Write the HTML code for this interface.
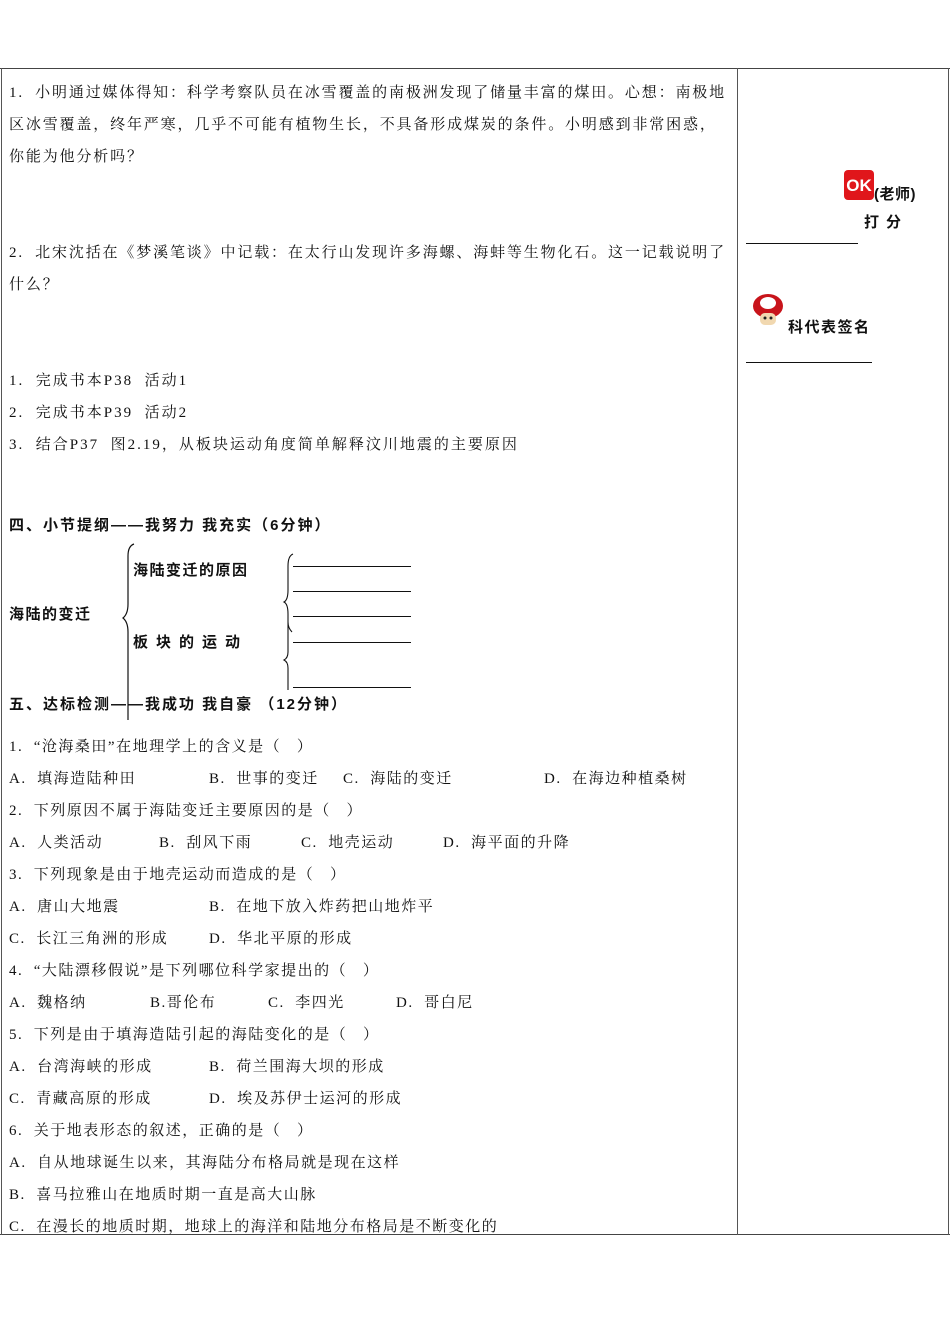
<!DOCTYPE html>
<html><head><meta charset="utf-8"><style>
body{margin:0;width:950px;height:1344px;background:#fff;position:relative;font-family:"Liberation Serif","Noto Serif CJK SC",serif;font-size:15px;color:#111;}
.l{position:absolute;white-space:nowrap;line-height:20px;letter-spacing:1.5px;margin-top:1px}
.j{letter-spacing:1.85px}
.b{font-family:"Liberation Sans","Noto Sans CJK SC",sans-serif;font-weight:bold;letter-spacing:1.5px}
.hl{position:absolute;height:1px;background:#111}
.vl{position:absolute;width:1px;background:#555}
</style></head><body>
<div class="hl" style="left:0;top:68px;width:950px;background:#444"></div>
<div class="hl" style="left:0;top:1234px;width:950px;background:#444"></div>
<div class="vl" style="left:1px;top:68px;height:1167px"></div>
<div class="vl" style="left:737px;top:68px;height:1167px"></div>
<div class="vl" style="left:948px;top:68px;height:1167px"></div>

<div class="l j" style="left:9px;top:82px">1.&nbsp; 小明通过媒体得知：科学考察队员在冰雪覆盖的南极洲发现了储量丰富的煤田。心想：南极地</div>
<div class="l j" style="left:9px;top:114px">区冰雪覆盖，终年严寒，几乎不可能有植物生长，不具备形成煤炭的条件。小明感到非常困惑，</div>
<div class="l j" style="left:9px;top:146px">你能为他分析吗？</div>
<div class="l j" style="left:9px;top:242px">2.&nbsp; 北宋沈括在《梦溪笔谈》中记载：在太行山发现许多海螺、海蚌等生物化石。这一记载说明了</div>
<div class="l j" style="left:9px;top:274px">什么？</div>
<div class="l" style="left:9px;top:370px;letter-spacing:2px">1.&nbsp; 完成书本P38&nbsp; 活动1</div>
<div class="l" style="left:9px;top:402px;letter-spacing:2px">2.&nbsp; 完成书本P39&nbsp; 活动2</div>
<div class="l" style="left:9px;top:434px;letter-spacing:2px">3.&nbsp; 结合P37&nbsp; 图2.19，从板块运动角度简单解释汶川地震的主要原因</div>

<div class="l b" style="left:9px;top:515px;letter-spacing:2px">四、小节提纲——我努力 我充实（6分钟）</div>
<div class="l b" style="left:9px;top:604px">海陆的变迁</div>
<div class="l b" style="left:133px;top:560px">海陆变迁的原因</div>
<div class="l b" style="left:133px;top:632px;letter-spacing:8px">板块的运动</div>
<svg style="position:absolute;left:120px;top:542px" width="20" height="180"><path d="M14 2 Q8 4 8 14 L8 62 Q8 72 3 76 Q8 80 8 90 L8 178" fill="none" stroke="#111" stroke-width="1.2"/></svg>
<svg style="position:absolute;left:282px;top:552px" width="14" height="140"><path d="M11 2 Q6 4 6 14 L6 38 Q6 48 2 50 Q6 52 6 62 L6 70 Q6 76 10 80 M6 64 L6 100 Q6 106 2 108 Q6 110 6 116 L6 138" fill="none" stroke="#111" stroke-width="1.1"/></svg>
<div class="hl" style="left:293px;top:566px;width:118px"></div>
<div class="hl" style="left:293px;top:591px;width:118px"></div>
<div class="hl" style="left:293px;top:616px;width:118px"></div>
<div class="hl" style="left:293px;top:642px;width:118px"></div>
<div class="hl" style="left:293px;top:687px;width:118px"></div>
<div class="l b" style="left:9px;top:694px;letter-spacing:2px">五、达标检测——我成功 我自豪 （12分钟）</div>

<div class="l" style="left:9px;top:736px">1.&nbsp; “沧海桑田”在地理学上的含义是（&nbsp; &nbsp;）</div>
<div class="l" style="left:9px;top:768px">A.&nbsp; 填海造陆种田</div><div class="l" style="left:209px;top:768px">B.&nbsp; 世事的变迁</div><div class="l" style="left:343px;top:768px">C.&nbsp; 海陆的变迁</div><div class="l" style="left:544px;top:768px">D.&nbsp; 在海边种植桑树</div>
<div class="l" style="left:9px;top:800px">2.&nbsp; 下列原因不属于海陆变迁主要原因的是（&nbsp; &nbsp;）</div>
<div class="l" style="left:9px;top:832px">A.&nbsp; 人类活动</div><div class="l" style="left:159px;top:832px">B.&nbsp; 刮风下雨</div><div class="l" style="left:301px;top:832px">C.&nbsp; 地壳运动</div><div class="l" style="left:443px;top:832px">D.&nbsp; 海平面的升降</div>
<div class="l" style="left:9px;top:864px">3.&nbsp; 下列现象是由于地壳运动而造成的是（&nbsp; &nbsp;）</div>
<div class="l" style="left:9px;top:896px">A.&nbsp; 唐山大地震</div><div class="l" style="left:209px;top:896px">B.&nbsp; 在地下放入炸药把山地炸平</div>
<div class="l" style="left:9px;top:928px">C.&nbsp; 长江三角洲的形成</div><div class="l" style="left:209px;top:928px">D.&nbsp; 华北平原的形成</div>
<div class="l" style="left:9px;top:960px">4.&nbsp; “大陆漂移假说”是下列哪位科学家提出的（&nbsp; &nbsp;）</div>
<div class="l" style="left:9px;top:992px">A.&nbsp; 魏格纳</div><div class="l" style="left:150px;top:992px">B.哥伦布</div><div class="l" style="left:268px;top:992px">C.&nbsp; 李四光</div><div class="l" style="left:396px;top:992px">D.&nbsp; 哥白尼</div>
<div class="l" style="left:9px;top:1024px">5.&nbsp; 下列是由于填海造陆引起的海陆变化的是（&nbsp; &nbsp;）</div>
<div class="l" style="left:9px;top:1056px">A.&nbsp; 台湾海峡的形成</div><div class="l" style="left:209px;top:1056px">B.&nbsp; 荷兰围海大坝的形成</div>
<div class="l" style="left:9px;top:1088px">C.&nbsp; 青藏高原的形成</div><div class="l" style="left:209px;top:1088px">D.&nbsp; 埃及苏伊士运河的形成</div>
<div class="l" style="left:9px;top:1120px">6.&nbsp; 关于地表形态的叙述，正确的是（&nbsp; &nbsp;）</div>
<div class="l" style="left:9px;top:1152px">A.&nbsp; 自从地球诞生以来，其海陆分布格局就是现在这样</div>
<div class="l" style="left:9px;top:1184px">B.&nbsp; 喜马拉雅山在地质时期一直是高大山脉</div>
<div class="l" style="left:9px;top:1216px">C.&nbsp; 在漫长的地质时期，地球上的海洋和陆地分布格局是不断变化的</div>

<!-- right column -->
<svg style="position:absolute;left:844px;top:170px" width="30" height="30"><rect x="0" y="0" width="30" height="30" rx="4" fill="#e0161b"/><text x="15" y="21" text-anchor="middle" font-family="Liberation Sans,sans-serif" font-weight="bold" font-size="17" fill="#fff">OK</text></svg>
<div class="l b" style="left:874px;top:184px;letter-spacing:0.5px">(老师)</div>
<div class="l b" style="left:864px;top:212px;letter-spacing:7px">打分</div>
<div class="hl" style="left:746px;top:243px;width:112px"></div>
<svg style="position:absolute;left:751px;top:293px" width="34" height="34"><ellipse cx="17" cy="13" rx="15" ry="12" fill="#c8141b"/><ellipse cx="17" cy="10" rx="8" ry="6" fill="#fff"/><rect x="9" y="20" width="16" height="12" rx="5" fill="#f1d8b0"/><circle cx="14" cy="25" r="1.5" fill="#222"/><circle cx="20" cy="25" r="1.5" fill="#222"/></svg>
<div class="l b" style="left:788px;top:317px">科代表签名</div>
<div class="hl" style="left:746px;top:362px;width:126px"></div>
</body></html>
